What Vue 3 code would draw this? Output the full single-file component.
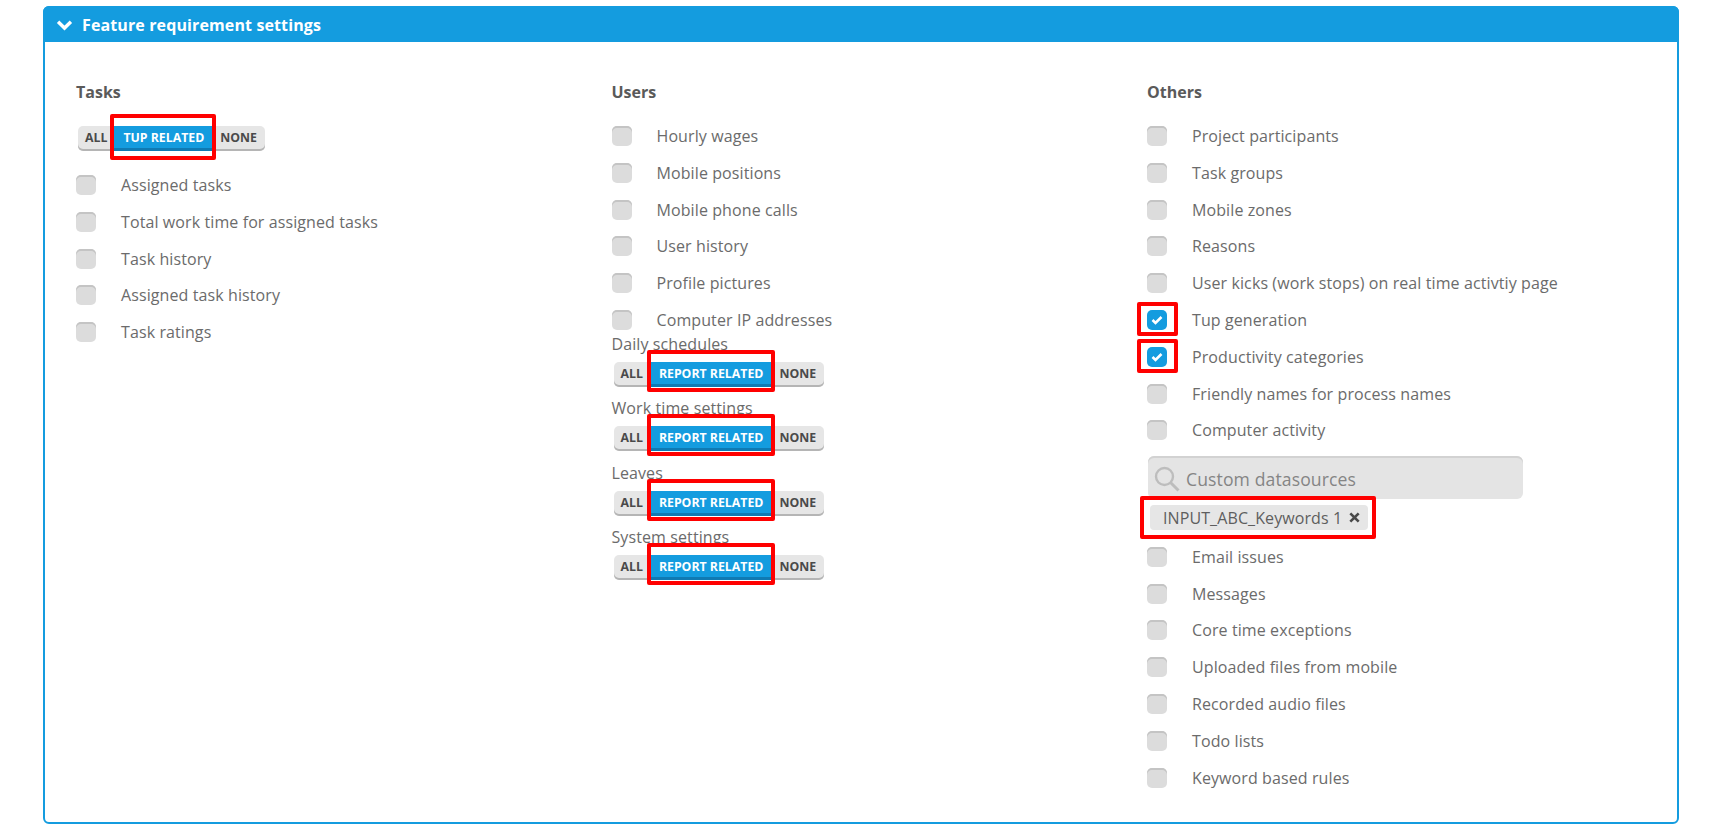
<script setup>
const tasks = ['Assigned tasks', 'Total work time for assigned tasks', 'Task history', 'Assigned task history', 'Task ratings']
const users = ['Hourly wages', 'Mobile positions', 'Mobile phone calls', 'User history', 'Profile pictures', 'Computer IP addresses']
const groups = ['Daily schedules', 'Work time settings', 'Leaves', 'System settings']
const others1 = [
  { t: 'Project participants' }, { t: 'Task groups' }, { t: 'Mobile zones' }, { t: 'Reasons' },
  { t: 'User kicks (work stops) on real time activtiy page' },
  { t: 'Tup generation', on: true }, { t: 'Productivity categories', on: true },
  { t: 'Friendly names for process names' }, { t: 'Computer activity' }
]
const others2 = ['Email issues', 'Messages', 'Core time exceptions', 'Uploaded files from mobile', 'Recorded audio files', 'Todo lists', 'Keyword based rules']
</script>

<template>
  <div class="page">
    <section class="panel">
      <header class="head">
        <svg class="chev" viewBox="0 0 18 12" width="17" height="12"><path d="M2.2 2.600 9 9.200l6.800-6.600" fill="none" stroke="#fff" stroke-width="3.600" /></svg>
        <span>Feature requirement settings</span>
      </header>
      <div class="cols">
        <div class="col">
          <h3>Tasks</h3>
          <div class="toggle first">
            <span class="seg">ALL</span>
            <span class="seg on">TUP RELATED<i class="mark m-tup"></i></span>
            <span class="seg">NONE</span>
          </div>
          <label v-for="t in tasks" :key="t" class="row"><span class="box"></span><span>{{ t }}</span></label>
        </div>

        <div class="col">
          <h3>Users</h3>
          <label v-for="t in users" :key="t" class="row"><span class="box"></span><span>{{ t }}</span></label>
          <div v-for="g in groups" :key="g" class="group">
            <div class="glabel">{{ g }}</div>
            <div class="toggle">
              <span class="seg">ALL</span>
              <span class="seg on">REPORT RELATED<i class="mark m-rep"></i></span>
              <span class="seg">NONE</span>
            </div>
          </div>
        </div>

        <div class="col">
          <h3>Others</h3>
          <label v-for="o in others1" :key="o.t" class="row">
            <span class="box" :class="{ checked: o.on }">
              <svg v-if="o.on" viewBox="0 0 12 10" width="12" height="10"><path d="M1.500 5 4.500 8 10.500 2" fill="none" stroke="#fff" stroke-width="2.600" /></svg>
              <i v-if="o.on" class="mark m-check"></i>
            </span>
            <span>{{ o.t }}</span>
          </label>
          <div class="search">
            <svg viewBox="0 0 26 26" width="26" height="26"><circle cx="10.500" cy="10.500" r="8.500" fill="none" stroke="#bdbdbd" stroke-width="2.400" /><path d="M16.500 16.500 24.500 24.500" stroke="#bdbdbd" stroke-width="3" /></svg>
            <span>Custom datasources</span>
          </div>
          <div class="chip">
            <span>INPUT_ABC_Keywords 1</span>
            <svg viewBox="0 0 10 10" width="11" height="11"><path d="M1.200 1.200 8.800 8.800M8.800 1.200 1.200 8.800" stroke="#4a4a4a" stroke-width="2.400" /></svg>
            <i class="mark m-chip"></i>
          </div>
          <label v-for="t in others2" :key="t" class="row"><span class="box"></span><span>{{ t }}</span></label>
        </div>
      </div>
    </section>
  </div>
</template>

<style scoped>
.page {
  padding: 6px 36px 14px 43px;
  font-family: "Open Sans", sans-serif;
  font-size: 16px;
  letter-spacing: 0.1px;
  color: #6b6b6b;
  box-sizing: border-box;
  height: 838px;
}
.panel {
  height: 818px;
  box-sizing: border-box;
  border: 2px solid #149cdf;
  border-radius: 6px;
  background: #fff;
}
.head {
  margin: -2px -2px 0;
  height: 36px;
  background: #149cdf;
  border-radius: 6px 6px 0 0;
  color: #fff;
  font-weight: 700;
  font-size: 16px;
  letter-spacing: 0.12px;
  display: flex;
  align-items: center;
  padding: 1px 0 0 13px;
  box-sizing: border-box;
  gap: 9px;
}
.cols {
  display: grid;
  grid-template-columns: 535.500px 535.500px 1fr;
  padding: 39px 0 0 31px;
}
h3 {
  margin: 0 0 17px;
  font-size: 16px;
  line-height: 22px;
  font-weight: 700;
  letter-spacing: 0;
  color: #5a5a5a;
}
.row {
  display: flex;
  align-items: center;
  height: 32px;
  margin-bottom: 4.800px;
}
.box {
  position: relative;
  flex: none;
  width: 20px;
  height: 20px;
  margin-right: 25px;
  box-sizing: border-box;
  border-radius: 5px;
  background: #dcdcdc;
  box-shadow: inset 0 2px 0 #c4c4c4;
  display: flex;
  align-items: center;
  justify-content: center;
}
.box.checked {
  background: #149cdf;
  box-shadow: none;
}
.toggle {
  display: flex;
  width: max-content;
  height: 25px;
  margin-left: 2px;
  border-radius: 5px;
  background: #e6e6e6;
  box-shadow: inset 0 -2px 0 #b5b5b5;
  font-size: 12.300px;
  letter-spacing: 0;
  font-weight: 700;
  color: #4a4a4a;
}
.toggle.first {
  margin-top: 22.500px;
  margin-bottom: 18.500px;
}
.seg {
  position: relative;
  padding: 0 7px;
  line-height: 24px;
}
.seg:last-child { padding-right: 8px; }
.seg.on {
  padding: 0 9px;
  background: #149cdf;
  color: #fff;
  box-shadow: inset 0 -3px 0 #0f7ab3;
}
.group {
  height: 64.600px;
  margin-top: -3.200px;
  margin-bottom: 3.200px;
}
.glabel {
  line-height: 13.200px;
  height: 24px;
}
.search {
  margin: 9.800px 0 6px 1px;
  width: 375px;
  height: 43px;
  box-sizing: border-box;
  background: #e4e4e4;
  border-radius: 6px;
  box-shadow: inset 0 2px 0 #d2d2d2;
  display: flex;
  align-items: center;
  padding: 2px 0 0 6px;
  gap: 6px;
  font-size: 17.600px;
  color: #858585;
}
.chip {
  position: relative;
  margin: 0 0 10.600px 3px;
  width: 218px;
  height: 25px;
  box-sizing: border-box;
  padding: 0 8px 0 13px;
  background: #e6e6e6;
  border-radius: 4px;
  display: flex;
  align-items: center;
  justify-content: space-between;
  color: #5e5e5e;
}
.mark {
  position: absolute;
  border: 4px solid #f00;
  border-radius: 2px;
  box-sizing: border-box;
  pointer-events: none;
}
.m-tup { left: -4px; right: -3px; top: -12px; bottom: -9px; }
.m-rep { left: -3px; right: -3px; top: -12px; bottom: -5px; }
.m-check { left: -10px; top: -8px; width: 41px; height: 34px; }
.m-chip { left: -10px; right: -8px; top: -9px; bottom: -9px; }
</style>
